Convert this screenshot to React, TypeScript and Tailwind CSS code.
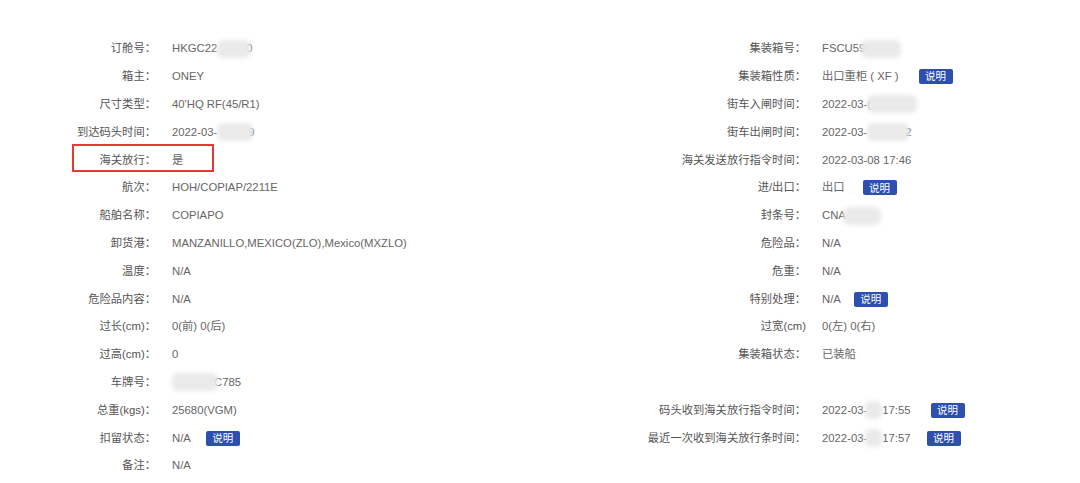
import React from 'react';

type Part = string | { blur: number; mr?: number; ml?: number };

interface Row {
  label: string;
  colon?: boolean;
  value: Part[];
  note?: number;
  boxed?: boolean;
}

const leftRows: Row[] = [
  { label: '订舱号', value: ['HKGC22', { blur: 34, mr: -5 }, '0'] },
  { label: '箱主', value: ['ONEY'] },
  { label: '尺寸类型', value: ["40'HQ RF(45/R1)"] },
  { label: '到达码头时间', value: ['2022-03-', { blur: 36, mr: -5 }, '9'] },
  { label: '海关放行', value: ['是'], boxed: true },
  { label: '航次', value: ['HOH/COPIAP/2211E'] },
  { label: '船舶名称', value: ['COPIAPO'] },
  { label: '卸货港', value: ['MANZANILLO,MEXICO(ZLO),Mexico(MXZLO)'] },
  { label: '温度', value: ['N/A'] },
  { label: '危险品内容', value: ['N/A'] },
  { label: '过长(cm)', value: ['0(前) 0(后)'] },
  { label: '过高(cm)', value: ['0'] },
  { label: '车牌号', value: [{ blur: 46, mr: -4 }, 'C785'] },
  { label: '总重(kgs)', value: ['25680(VGM)'] },
  { label: '扣留状态', value: ['N/A'], note: 15 },
  { label: '备注', value: ['N/A'] },
];

const rightRows: (Row | null)[] = [
  { label: '集装箱号', value: ['FSCU59', { blur: 40, ml: -4 }] },
  { label: '集装箱性质', value: ['出口重柜 ( XF )'], note: 20 },
  { label: '街车入闸时间', value: ['2022-03-(', { blur: 50, ml: -4 }] },
  { label: '街车出闸时间', value: ['2022-03-', { blur: 42, mr: -4 }, '2'] },
  { label: '海关发送放行指令时间', value: ['2022-03-08 17:46'] },
  { label: '进/出口', value: ['出口'], note: 18 },
  { label: '封条号', value: ['CNA', { blur: 38, ml: -3 }] },
  { label: '危险品', value: ['N/A'] },
  { label: '危重', value: ['N/A'] },
  { label: '特别处理', value: ['N/A'], note: 13 },
  { label: '过宽(cm)', colon: false, value: ['0(左) 0(右)'] },
  { label: '集装箱状态', value: ['已装船'] },
  null,
  { label: '码头收到海关放行指令时间', value: ['2022-03-', { blur: 17, ml: -2 }, '17:55'], note: 20 },
  { label: '最近一次收到海关放行条时间', value: ['2022-03-', { blur: 17, ml: -2 }, '17:57'], note: 16 },
];

function Blur({ w, ml = 0, mr = 0 }: { w: number; ml?: number; mr?: number }) {
  return (
    <span
      className="relative z-10 inline-block h-[18px] rounded-[6px] bg-[#eaeaea] align-middle blur-[2px]"
      style={{ width: w, marginLeft: ml, marginRight: mr }}
    />
  );
}

function NoteButton({ ml }: { ml: number }) {
  return (
    <span
      className="inline-flex h-[15px] w-[34px] items-center justify-center rounded-[2px] bg-[#2d4fb0] text-[10.5px] leading-none text-white"
      style={{ marginLeft: ml }}
    >
      说明
    </span>
  );
}

function InfoRow({ row, labelWidth }: { row: Row | null; labelWidth: string }) {
  if (!row) return <div className="h-[27.8px]" />;
  return (
    <div className="flex h-[27.8px] items-center">
      <div className={`${labelWidth} shrink-0 text-right text-[#555]`}>
        {row.label}
        {row.colon === false ? '' : '：'}
      </div>
      <div className="flex items-center whitespace-nowrap pl-4 text-[#666]">
        {row.value.map((p, i) =>
          typeof p === 'string' ? (
            <span key={i} className="relative">{p}</span>
          ) : (
            <Blur key={i} w={p.blur} ml={p.ml} mr={p.mr} />
          )
        )}
        {row.note !== undefined && <NoteButton ml={row.note} />}
      </div>
    </div>
  );
}

export default function App() {
  return (
    <div
      className="h-[483px] w-[1080px] overflow-hidden bg-white text-[11.3px]"
      style={{ fontFamily: '"Liberation Sans", "Noto Sans CJK SC", sans-serif' }}
    >
      <div className="flex pt-[35px]">
        <div className="w-[540px]">
          {leftRows.map((row, i) => (
            <div key={i} className="relative">
              {row.boxed && (
                <div className="pointer-events-none absolute left-[72px] top-[-2px] h-[28px] w-[142px] border-2 border-[#e53935]" />
              )}
              <InfoRow row={row} labelWidth="w-[156px]" />
            </div>
          ))}
        </div>
        <div className="flex-1">
          {rightRows.map((row, i) => (
            <InfoRow key={i} row={row} labelWidth="w-[266px]" />
          ))}
        </div>
      </div>
    </div>
  );
}
